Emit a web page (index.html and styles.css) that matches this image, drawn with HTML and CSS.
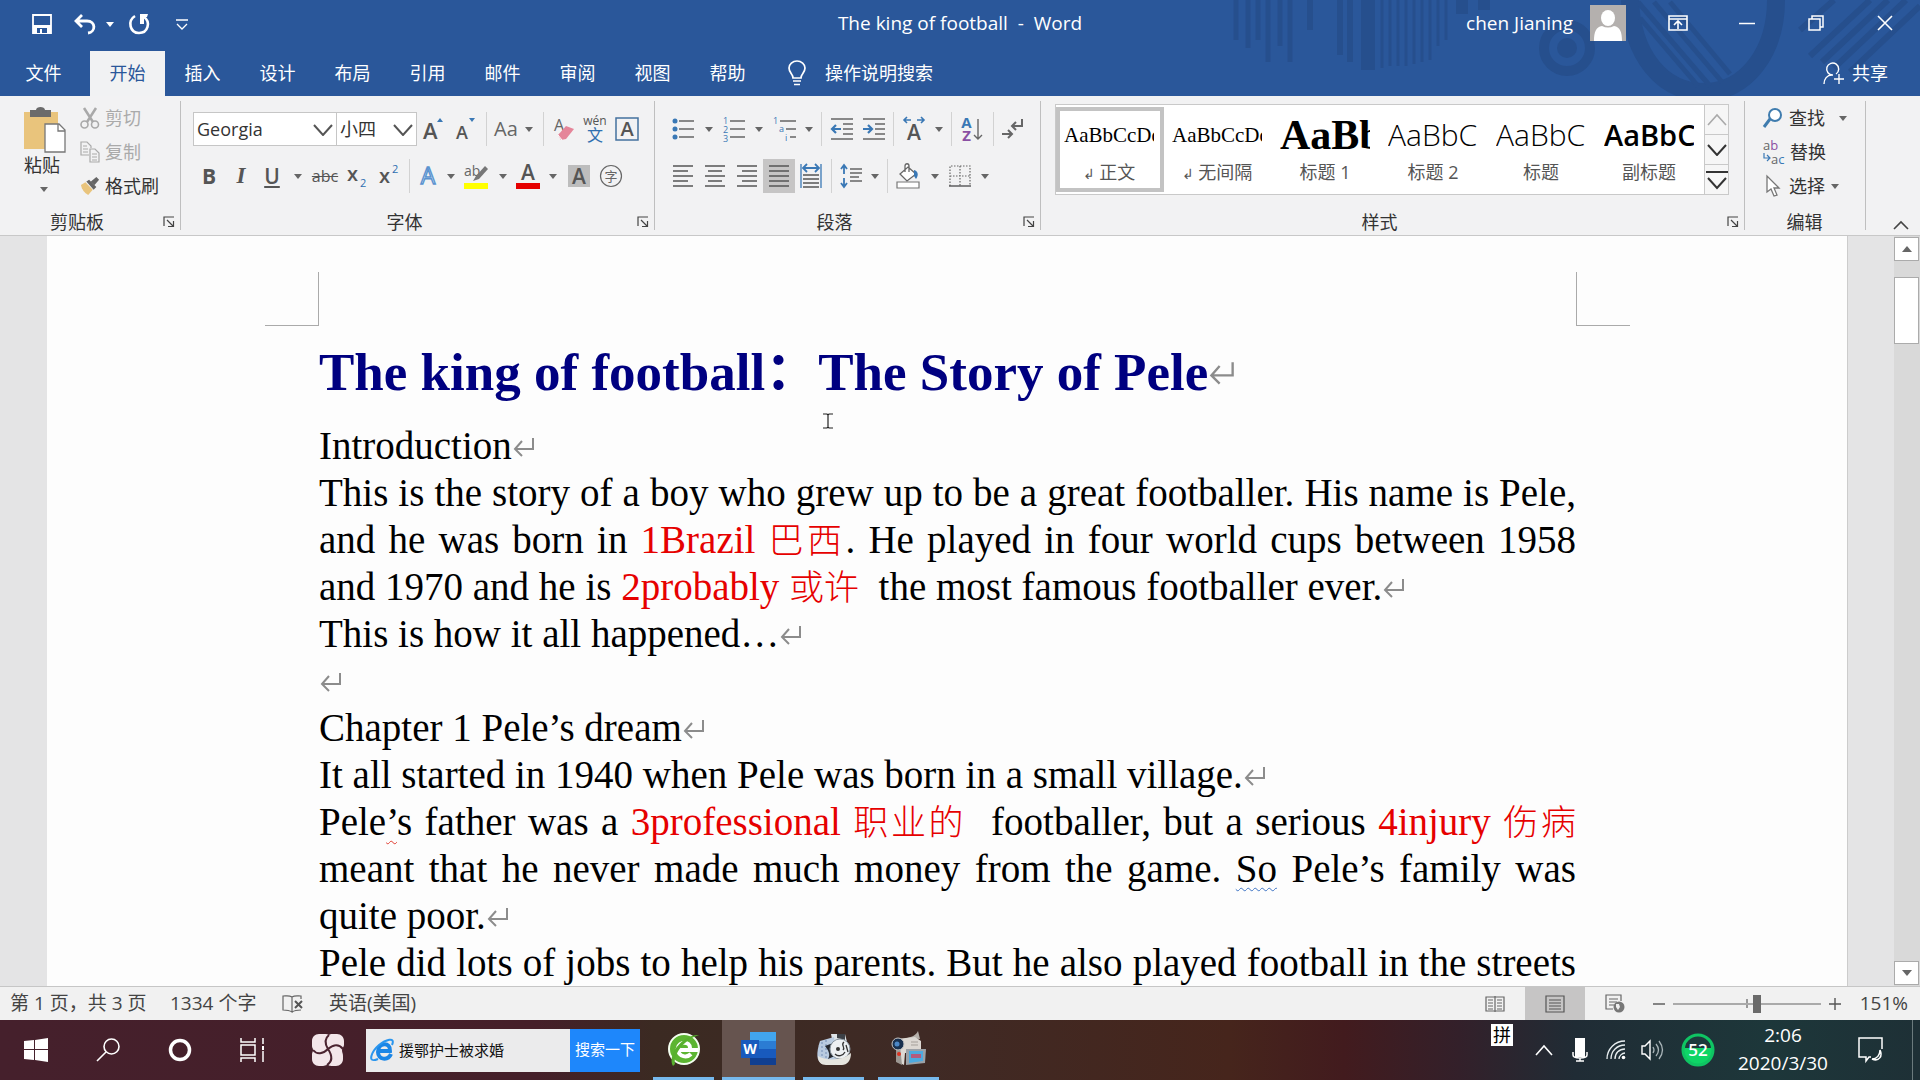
FILE: index.html
```html
<!DOCTYPE html>
<html lang="zh-CN">
<head>
<meta charset="utf-8">
<title>The king of football - Word</title>
<link rel="stylesheet" href="styles.css">
</head>
<body>
<svg class="defs" aria-hidden="true">
  <symbol id="drop" viewBox="0 0 8 5"><path d="M0 0h8L4 5z" fill="currentColor"/></symbol>
  <symbol id="chev" viewBox="0 0 20 12"><path d="M1 1l9 10 9-10" fill="none" stroke="currentColor" stroke-width="2"/></symbol>
  <symbol id="launch" viewBox="0 0 12 12"><path d="M1 10V1h10M4 4l6 6M10.500 5v5.500H5" fill="none" stroke="#444" stroke-width="1.200"/></symbol>
  <symbol id="ret" viewBox="0 0 22 20"><path d="M20 1v11H2M9 4l-7 8 7 7" fill="none" stroke="#8c8c8c" stroke-width="2"/></symbol>
</svg>

<header class="head">
  <svg class="art" viewBox="0 0 720 96" aria-hidden="true">
    <g fill="none" stroke="#264f8d">
      <path stroke-width="5" d="M36 0v40M48 0v48M58 0v40M68 0v62M80 0v46M90 0v62"/>
      <path stroke-width="6" d="M110 0v30M140 0v55M150 0v62"/>
      <path stroke-width="14" d="M168 0v70"/>
      <path stroke-width="3" d="M182 0v68M190 0v66M198 0v66M206 0v66M214 0v64M222 0v62M230 0v60M238 0v46M246 0v40"/>
      <path stroke-width="12" d="M262 0v14M284 0v10"/>
      <circle cx="367" cy="48" r="23" stroke-width="10"/>
      <path stroke-width="18" d="M430 0c2 55 32 92 74 92s72-40 72-92"/>
      <path stroke-width="5" d="M440 18l58 68M438 2l72 84M454 2l68 80M470 2l60 72"/>
      <path stroke-width="6" d="M610 56l60-56M622 62l66-62M634 68l72-68M650 72l70-66M600 30l34-30"/>
    </g>
    <circle cx="367" cy="48" r="10" fill="#264f8d"/>
  </svg>
  <div class="titlebar">
    <div class="quick">
      <button aria-label="保存"><svg width="20" height="20" viewBox="0 0 20 20"><path d="M1 1h18v18H1z" fill="none" stroke="#fff" stroke-width="1.800"/><path d="M1 11h18v8H1z" fill="#fff"/><path d="M5 14h10v5H5z" fill="#2a579a"/><path d="M8 15h2v4H8z" fill="#fff"/></svg></button>
      <button class="undo" aria-label="撤消"><svg width="22" height="20" viewBox="0 0 22 20"><path d="M8 1L2 7l6 6M3 7h10c9 0 9 11 1 12" fill="none" stroke="#fff" stroke-width="2.800"/></svg></button>
      <button class="mini" aria-label="撤消列表"><svg width="8" height="5"><use href="#drop"/></svg></button>
      <button class="redo" aria-label="重复"><svg width="22" height="22" viewBox="0 0 22 22"><path d="M7 3C-1 8 2 20 11 20s12-11 5-16" fill="none" stroke="#fff" stroke-width="2.600"/><path d="M12 1h8l-1 3h-3v7h-4z" fill="#fff"/></svg></button>
      <button class="custom" aria-label="自定义"><svg width="12" height="11" viewBox="0 0 12 11"><path d="M0 1h12M1 5l5 5 5-5" fill="none" stroke="#fff" stroke-width="1.300"/></svg></button>
    </div>
    <div class="doc-name">The king of football&nbsp; -&nbsp; Word</div>
    <div class="account">
      <span>chen Jianing</span>
      <svg class="avatar" width="36" height="36" viewBox="0 0 36 36"><path d="M0 0h36v36H0z" fill="#b4b0ae"/><ellipse cx="18" cy="13" rx="7" ry="8" fill="#fff"/><path d="M4 36c0-9 2-14 8-15 4 2 8 2 12 0 6 1 8 6 8 15z" fill="#fff"/></svg>
      <button class="win" aria-label="功能区显示选项"><svg width="20" height="16" viewBox="0 0 20 16"><path d="M1 1h18v14H1zM1 4h18M10 14V6M6 10l4-4 4 4" fill="none" stroke="#fff" stroke-width="1.600"/></svg></button>
      <button class="win" aria-label="最小化"><svg width="16" height="16"><path d="M0 8.500h16" stroke="#fff" stroke-width="1.500"/></svg></button>
      <button class="win" aria-label="还原"><svg width="16" height="16" viewBox="0 0 16 16"><path d="M1 4h11v11H1zM4 4V1h11v11h-3" fill="none" stroke="#fff" stroke-width="1.500"/></svg></button>
      <button class="win" aria-label="关闭"><svg width="16" height="16" viewBox="0 0 16 16"><path d="M1 1l14 14M15 1L1 15" stroke="#fff" stroke-width="1.600"/></svg></button>
    </div>
  </div>
  <nav class="tabs">
    <button class="tab file">文件</button>
    <button class="tab active">开始</button>
    <button class="tab">插入</button>
    <button class="tab">设计</button>
    <button class="tab">布局</button>
    <button class="tab">引用</button>
    <button class="tab">邮件</button>
    <button class="tab">审阅</button>
    <button class="tab">视图</button>
    <button class="tab">帮助</button>
    <button class="tell"><svg width="20" height="26" viewBox="0 0 20 26"><path d="M6 18c0-4-4-5-4-10a8 7 0 0 1 16 0c0 5-4 6-4 10zM6 21h8M7 24.500h6" fill="none" stroke="#fff" stroke-width="1.700"/></svg>操作说明搜索</button>
    <button class="share"><svg width="22" height="24" viewBox="0 0 22 24"><path d="M10 14a6 6 0 1 1 3-1M1 23c0-5 3-9 8-9M16 13v10M11 18h10" fill="none" stroke="#fff" stroke-width="1.400"/></svg>共享</button>
  </nav>
</header>

<section class="ribbon">
  <div class="group clip">
    <div class="clip-body">
      <button class="paste"><svg width="42" height="46" viewBox="0 0 42 46"><path d="M0 5h34v37H0z" fill="#e9c47c"/><path d="M6 3h6c0-4 9-4 9 0h6v7H6z" fill="#6b6b6b"/><path d="M21 17h14l6 6v22H21z" fill="#fff" stroke="#777" stroke-width="1.300"/><path d="M34 17v7h7" fill="none" stroke="#777" stroke-width="1.300"/></svg><span>粘贴</span><svg class="dd" width="8" height="5"><use href="#drop"/></svg></button>
      <div class="stack">
        <button class="row off"><svg width="20" height="22" viewBox="0 0 20 22"><path d="M4 1l9 14M16 1L7 15" stroke="#a9a9a9" stroke-width="2.500"/><circle cx="4.500" cy="17.500" r="3.500" fill="none" stroke="#a9a9a9" stroke-width="1.600"/><circle cx="15" cy="17.500" r="3.500" fill="none" stroke="#a9a9a9" stroke-width="1.600"/></svg>剪切</button>
        <button class="row off"><svg width="20" height="22" viewBox="0 0 20 22"><path d="M9 14H1V1h6l4 4v2M10 8h5l4 4v9h-9zM3 5h4M3 8h5M3 11h5M12 13h5M12 16h5M12 19h5" fill="none" stroke="#aaa" stroke-width="1.200"/></svg>复制</button>
        <button class="row"><svg width="20" height="22" viewBox="0 0 22 22"><path d="M1 10l5-3 8 8-5 6c-4-2-7-6-8-11z" fill="#e9c47c"/><path d="M7 6l3-2 8 8-3 3zM12 6l6-5 3 3-5 6z" fill="#666"/></svg>格式刷</button>
      </div>
    </div>
    <div class="caption"><span>剪贴板</span><button aria-label="剪贴板选项"><svg width="12" height="12"><use href="#launch"/></svg></button></div>
  </div>

  <div class="group font">
    <div class="tools">
      <div class="toolrow">
        <label class="pick name"><select aria-label="字体"><option>Georgia</option></select><svg width="20" height="12"><use href="#chev"/></svg></label>
        <label class="pick size"><select aria-label="字号"><option>小四</option></select><svg width="20" height="12"><use href="#chev"/></svg></label>
        <button class="w32" aria-label="增大字号"><svg width="22" height="24"><text x="1" y="22" font-size="22" class="g">A</text><path d="M15 5l3-4 3 4z" fill="#3a78b5"/></svg></button>
        <button class="w32" aria-label="缩小字号"><svg width="22" height="24"><text x="2" y="22" font-size="18" class="g">A</text><path d="M15 1h6l-3 4z" fill="#3a78b5"/></svg></button>
        <i class="w10 sep"></i>
        <button class="w45" aria-label="更改大小写"><svg width="40" height="24"><text x="0" y="19" font-size="20" class="t">Aa</text><path d="M31 10h8l-4 5z" fill="#666"/></svg></button>
        <i class="w14 sep"></i>
        <button class="w30" aria-label="清除格式"><svg width="22" height="24"><text x="0" y="14" font-size="16" class="t">A</text><path d="M4 18l8-9 8 3-8 10-5 1z" fill="#e58599"/><path d="M4 18l4 5" stroke="#fff"/></svg></button>
        <button class="w30 pinyin" aria-label="拼音指南"><span>wén</span><span>文</span></button>
        <button class="w34" aria-label="字符边框"><svg width="24" height="24"><path d="M1 1h22v22H1z" fill="none" stroke="#44719f" stroke-width="1.500"/><text x="12" y="19" text-anchor="middle" font-size="20" class="g">A</text></svg></button>
      </div>
      <div class="toolrow">
        <button class="w32 big b">B</button>
        <button class="w32 big it">I</button>
        <button class="w30 big u">U</button>
        <button class="w22 dd" aria-label="下划线样式"><svg width="8" height="5"><use href="#drop"/></svg></button>
        <button class="w32 strike">abc</button>
        <button class="w32" aria-label="下标"><svg width="20" height="24"><text x="0" y="17" font-size="20" class="g">x</text><text x="13" y="23" font-size="11" fill="#2f6fb0">2</text></svg></button>
        <button class="w32" aria-label="上标"><svg width="20" height="24"><text x="0" y="19" font-size="20" class="g">x</text><text x="13" y="9" font-size="11" fill="#2f6fb0">2</text></svg></button>
        <i class="w8 sep"></i>
        <button class="w30" aria-label="文本效果"><svg width="22" height="24"><text x="11" y="20" text-anchor="middle" font-size="23" fill="#fff" stroke="#5b93cf" stroke-width="1.400">A</text></svg></button>
        <button class="w16 dd" aria-label="文本效果列表"><svg width="8" height="5"><use href="#drop"/></svg></button>
        <button class="w34" aria-label="突出显示"><svg width="24" height="26"><text x="0" y="13" font-size="14" class="t">ab</text><path d="M21 3l3 3-9 10-6 2 3-5z" fill="#777"/><path d="M0 20h24v6H0z" fill="#ff0"/></svg></button>
        <button class="w20 dd" aria-label="突出显示颜色"><svg width="8" height="5"><use href="#drop"/></svg></button>
        <button class="w30" aria-label="字体颜色"><svg width="24" height="26"><text x="12" y="17" text-anchor="middle" font-size="21" class="g">A</text><path d="M0 20h24v6H0z" fill="#e50000"/></svg></button>
        <button class="w20 dd" aria-label="字体颜色列表"><svg width="8" height="5"><use href="#drop"/></svg></button>
        <button class="w32" aria-label="字符底纹"><svg width="22" height="22"><path d="M0 0h22v22H0z" fill="#bdbdbd"/><text x="11" y="19" text-anchor="middle" font-size="21" class="g">A</text></svg></button>
        <button class="w32" aria-label="带圈字符"><svg width="24" height="24"><circle cx="12" cy="12" r="10.500" fill="none" stroke="#666" stroke-width="1.200"/><text x="12" y="17" text-anchor="middle" font-size="13" class="t">字</text></svg></button>
      </div>
    </div>
    <div class="caption"><span>字体</span><button aria-label="字体选项"><svg width="12" height="12"><use href="#launch"/></svg></button></div>
  </div>

  <div class="group para">
    <div class="tools">
      <div class="toolrow">
        <button class="w32" aria-label="项目符号"><svg width="22" height="22"><g fill="#3a78b5"><circle cx="3" cy="3" r="2.500"/><circle cx="3" cy="11" r="2.500"/><circle cx="3" cy="19" r="2.500"/></g><path d="M7 3h15M7 11h15M7 19h15" stroke="#666" stroke-width="1.300"/></svg></button>
        <button class="w20 dd" aria-label="项目符号列表"><svg width="8" height="5"><use href="#drop"/></svg></button>
        <button class="w30" aria-label="编号"><svg width="22" height="26"><g fill="#3a78b5" font-size="9"><text y="8">1</text><text y="17">2</text><text y="26">3</text></g><path d="M7 5h15M7 13h15M7 21h15" stroke="#666" stroke-width="1.300"/></svg></button>
        <button class="w20 dd" aria-label="编号列表"><svg width="8" height="5"><use href="#drop"/></svg></button>
        <button class="w32" aria-label="多级列表"><svg width="24" height="26"><g fill="#3a78b5" font-size="9"><text y="8">1</text><text x="6" y="16">a</text><text x="12" y="25">i</text></g><path d="M7 5h16M13 13h10M17 21h6" stroke="#666" stroke-width="1.300"/></svg></button>
        <button class="w16 dd" aria-label="多级列表样式"><svg width="8" height="5"><use href="#drop"/></svg></button>
        <i class="w8 sep"></i>
        <button class="w34" aria-label="减少缩进"><svg width="22" height="22"><path d="M0 1h22M12 6h10M12 11h10M12 16h10M0 21h22" stroke="#666" stroke-width="1.300"/><path d="M10 11H2M5 7l-4 4 4 4" fill="none" stroke="#3a78b5" stroke-width="2.200"/></svg></button>
        <button class="w30" aria-label="增加缩进"><svg width="22" height="22"><path d="M0 1h22M12 6h10M12 11h10M12 16h10M0 21h22" stroke="#666" stroke-width="1.300"/><path d="M0 11h8M5 7l4 4-4 4" fill="none" stroke="#3a78b5" stroke-width="2.200"/></svg></button>
        <i class="w8 sep"></i>
        <button class="w34" aria-label="中文版式"><svg width="24" height="24"><text x="12" y="23" text-anchor="middle" font-size="21" class="g">A</text><path d="M9 3H2M5 0L2 3l3 3M15 3h7M19 0l3 3-3 3" fill="none" stroke="#3a78b5" stroke-width="1.600"/></svg></button>
        <button class="w16 dd" aria-label="中文版式列表"><svg width="8" height="5"><use href="#drop"/></svg></button>
        <i class="w8 sep"></i>
        <button class="w34 sort" aria-label="排序"><span class="az"><b>A</b><b>Z</b></span><svg width="9" height="24"><path d="M4 2v20M0 18l4 4 4-4" fill="none" stroke="#666" stroke-width="1.400"/></svg></button>
        <i class="w8 sep"></i>
        <button class="w32" aria-label="显示编辑标记"><svg width="22" height="20" viewBox="0 0 22 20"><path d="M20 0v7h-9M14 3l-4 4 4 4M0 15h9M6 11l4 4-4 4" fill="none" stroke="#666" stroke-width="2"/></svg></button>
      </div>
      <div class="toolrow">
        <button class="w32" aria-label="左对齐"><svg width="20" height="22"><path d="M0 1h20M0 6h15M0 11h20M0 16h15M0 21h20" stroke="#555" stroke-width="1.300"/></svg></button>
        <button class="w32" aria-label="居中"><svg width="20" height="22"><path d="M0 1h20M3 6h14M0 11h20M3 16h14M0 21h20" stroke="#555" stroke-width="1.300"/></svg></button>
        <button class="w32" aria-label="右对齐"><svg width="20" height="22"><path d="M0 1h20M5 6h15M0 11h20M5 16h15M0 21h20" stroke="#555" stroke-width="1.300"/></svg></button>
        <button class="w32 on" aria-label="两端对齐"><svg width="20" height="22"><path d="M0 1h20M0 6h20M0 11h20M0 16h20M0 21h20" stroke="#555" stroke-width="1.300"/></svg></button>
        <button class="w32" aria-label="分散对齐"><svg width="22" height="24"><path d="M1 0v24M21 0v24" stroke="#3a78b5" stroke-width="1.300"/><path d="M4 4h14M7 0L3 4l4 4M15 0l4 4-4 4" fill="none" stroke="#3a78b5" stroke-width="1.800"/><path d="M3 11h16M3 15h16M3 19h16M3 23h16" stroke="#555" stroke-width="1.300"/></svg></button>
        <i class="w8 sep"></i>
        <button class="w32" aria-label="行距"><svg width="22" height="24"><path d="M4 10V2M1 5l3-4 3 4M4 14v8M1 19l3 4 3-4" fill="none" stroke="#3a78b5" stroke-width="1.800"/><path d="M10 5h12M10 9h12M10 13h9M10 17h12" stroke="#666" stroke-width="1.300"/></svg></button>
        <button class="w16 dd" aria-label="行距列表"><svg width="8" height="5"><use href="#drop"/></svg></button>
        <i class="w8 sep"></i>
        <button class="w34" aria-label="底纹"><svg width="24" height="26"><path d="M1 19h22v6H1z" fill="#fff" stroke="#777" stroke-width="1.200"/><path d="M12 4l8 7-9 7-7-7zM9 9V3c0-3 4-3 4 0v6" fill="#fff" stroke="#666" stroke-width="1.300"/><path d="M18 7c4 1 5 5 2 9l-2-3z" fill="#3a78b5"/></svg></button>
        <button class="w20 dd" aria-label="底纹颜色"><svg width="8" height="5"><use href="#drop"/></svg></button>
        <button class="w30" aria-label="边框"><svg width="22" height="22"><path d="M1 21V1h20v20M11 1v20M1 11h20" fill="none" stroke="#666" stroke-width="1.200" stroke-dasharray="1.500 1.500"/><path d="M0 21h22" stroke="#555" stroke-width="1.400"/></svg></button>
        <button class="w20 dd" aria-label="边框列表"><svg width="8" height="5"><use href="#drop"/></svg></button>
      </div>
    </div>
    <div class="caption"><span>段落</span><button aria-label="段落选项"><svg width="12" height="12"><use href="#launch"/></svg></button></div>
  </div>

  <div class="group styles">
    <div class="gallery">
      <button class="style sel"><span class="pv body">AaBbCcDd</span><span class="nm"><small>↲</small> 正文</span></button>
      <button class="style"><span class="pv body">AaBbCcDd</span><span class="nm"><small>↲</small> 无间隔</span></button>
      <button class="style"><span class="pv h1">AaBb</span><span class="nm">标题 1</span></button>
      <button class="style"><span class="pv h2">AaBbC</span><span class="nm">标题 2</span></button>
      <button class="style"><span class="pv h2">AaBbC</span><span class="nm">标题</span></button>
      <button class="style"><span class="pv sub">AaBbC</span><span class="nm">副标题</span></button>
      <div class="scrolls">
        <button class="dim" aria-label="上一行"><svg width="20" height="12" viewBox="0 0 20 12"><path d="M1 11l9-10 9 10" fill="none" stroke="currentColor" stroke-width="1.600"/></svg></button>
        <button aria-label="下一行"><svg width="20" height="12"><use href="#chev"/></svg></button>
        <button aria-label="其他"><svg width="22" height="20" viewBox="0 0 22 20"><path d="M0 2h22M2 8l9 10 9-10" fill="none" stroke="#333" stroke-width="2"/></svg></button>
      </div>
    </div>
    <div class="caption"><span>样式</span><button aria-label="样式选项"><svg width="12" height="12"><use href="#launch"/></svg></button></div>
  </div>

  <div class="group edit">
    <div class="stack">
      <button class="row"><svg width="20" height="22" viewBox="0 0 20 22"><circle cx="12" cy="8" r="6" fill="#fff" stroke="#3f7cae" stroke-width="2"/><path d="M7 12l-6 8" stroke="#3f7cae" stroke-width="3"/></svg>查找<svg class="far" width="8" height="5"><use href="#drop"/></svg></button>
      <button class="row"><svg width="22" height="26"><text x="0" y="11" font-size="13" class="t">a<tspan fill="#8a4fa3">b</tspan></text><text x="8" y="25" font-size="13" class="t">a<tspan fill="#3a78b5">c</tspan></text><path d="M1 14v5h5M4 16l3 3-3 3" fill="none" stroke="#3a78b5" stroke-width="1.200"/></svg>替换</button>
      <button class="row"><svg width="20" height="24" viewBox="0 0 20 24"><path d="M4 2v16l4-3 3 7 3-1-3-7h5z" fill="#fff" stroke="#777" stroke-width="1.300"/></svg>选择<svg width="8" height="5"><use href="#drop"/></svg></button>
    </div>
    <div class="caption"><span>编辑</span></div>
  </div>
  <div class="fold"><button aria-label="折叠功能区"><svg width="16" height="10" viewBox="0 0 16 10"><path d="M1 9l7-7 7 7" fill="none" stroke="#444" stroke-width="1.600"/></svg></button></div>
</section>

<main class="work">
  <article class="page">
    <div class="marks"><i class="ml"></i><i class="mr"></i></div>
    <h1>The king of football：The Story of Pele<svg class="ret" width="26" height="24"><use href="#ret"/></svg></h1>
    <svg class="ibeam" width="10" height="16" viewBox="0 0 10 16"><path d="M0 1h4l1 1 1-1h4M5 2v12M0 15h4l1-1 1 1h4" fill="none" stroke="#222" stroke-width="1.200"/></svg>
    <p>Introduction<svg class="ret" width="22" height="20"><use href="#ret"/></svg></p>
    <p><span class="full">This is the story of a boy who grew up to be a great footballer. His name is Pele,</span><span class="full">and he was born in <em>1Brazil <b>巴西</b></em>. He played in four world cups between 1958</span><span class="last">and 1970 and he is <em>2probably <b>或许</b></em>&nbsp; the most famous footballer ever.<svg class="ret" width="22" height="20"><use href="#ret"/></svg></span></p>
    <p>This is how it all happened…<svg class="ret" width="22" height="20"><use href="#ret"/></svg></p>
    <p><svg class="ret" width="22" height="20"><use href="#ret"/></svg></p>
    <p>Chapter 1 Pele’s dream<svg class="ret" width="22" height="20"><use href="#ret"/></svg></p>
    <p>It all started in 1940 when Pele was born in a small village.<svg class="ret" width="22" height="20"><use href="#ret"/></svg></p>
    <p><span class="full">Pele<span class="bad">’</span>s father was a <em>3professional <b>职业的</b></em>&nbsp; footballer, but a serious <em>4injury <b>伤病</b></em></span><span class="full">meant that he never made much money from the game. <span class="gram">So</span> Pele’s family was</span><span class="last">quite poor.<svg class="ret" width="22" height="20"><use href="#ret"/></svg></span></p>
    <p><span class="full">Pele did lots of jobs to help his parents. But he also played football in the streets</span></p>
  </article>
  <div class="vscroll">
    <button aria-label="向上滚动"><svg width="10" height="6" viewBox="0 0 10 6"><path d="M0 6h10L5 0z" fill="#666"/></svg></button>
    <div class="track"><div class="thumb"></div></div>
    <button aria-label="向下滚动"><svg width="10" height="6" viewBox="0 0 10 6"><path d="M0 0h10L5 6z" fill="#666"/></svg></button>
  </div>
</main>

<footer class="status">
  <span class="pages">第 1 页，共 3 页</span>
  <span class="words">1334 个字</span>
  <button class="proof" aria-label="校对"><svg width="22" height="18" viewBox="0 0 22 18"><path d="M10 2C7 0 4 1 1 1v14c3 0 6 0 9 2zM10 2c3-2 6-1 9-1v3M10 17c3-2 6-2 9-2" fill="none" stroke="#666" stroke-width="1.200"/><path d="M13 6l7 7M20 6l-7 7" stroke="#555" stroke-width="2"/></svg></button>
  <span class="lang">英语(美国)</span>
  <div class="views">
    <button aria-label="阅读视图"><svg width="20" height="18" viewBox="0 0 20 18"><path d="M10 2H1v14h9l0 1V1M10 2h9v14h-9M3 5h5M3 8h5M3 11h5M3 14h5M12 5h5M12 8h5M12 11h5M12 14h5" fill="none" stroke="#666" stroke-width="1.200"/></svg></button>
    <button class="on" aria-label="页面视图"><svg width="20" height="18" viewBox="0 0 20 18"><path d="M1 1h18v16H1zM4 5h12M4 8h12M4 11h12M4 14h12" fill="none" stroke="#555" stroke-width="1.200"/></svg></button>
    <button aria-label="Web 版式视图"><svg width="20" height="19" viewBox="0 0 20 19"><path d="M8 15H1V1h15v6M4 5h9M4 8h8M4 11h5" fill="none" stroke="#666" stroke-width="1.200"/><circle cx="14" cy="13" r="5.500" fill="#777"/><path d="M11 10l3 0 1 3-2 3-2-3z" fill="#eee"/></svg></button>
  </div>
  <button class="step" aria-label="缩小"><svg width="12" height="12"><path d="M0 6h12" stroke="#555" stroke-width="1.400"/></svg></button>
  <input class="zoom" type="range" min="0" max="100" value="57" aria-label="缩放">
  <button class="step" aria-label="放大"><svg width="12" height="12"><path d="M0 6h12M6 0v12" stroke="#555" stroke-width="1.400"/></svg></button>
  <span class="pct">151%</span>
</footer>

<div class="taskbar">
  <button class="tk" aria-label="开始"><svg width="24" height="24" viewBox="0 0 24 24"><path d="M0 3l10-1v9H0zM11 2l13-2v11H11zM0 12h10v10L0 21zM11 12h13v12l-13-2z" fill="#fff"/></svg></button>
  <button class="tk" aria-label="搜索"><svg width="24" height="24" viewBox="0 0 24 24"><circle cx="15.500" cy="8.500" r="7.500" fill="none" stroke="#fff" stroke-width="1.600"/><path d="M10 14L1 23" stroke="#fff" stroke-width="1.600"/></svg></button>
  <button class="tk" aria-label="Cortana"><svg width="24" height="24"><circle cx="12" cy="12" r="9.500" fill="none" stroke="#fff" stroke-width="3.500"/></svg></button>
  <button class="tk" aria-label="任务视图"><svg width="24" height="24" viewBox="0 0 24 24"><path d="M1 0v4h14V0M1 24v-4h14v4M1 7h14v10H1zM23 0v6M23 13v11" fill="none" stroke="#fff" stroke-width="1.500"/><path d="M22 8h2v4h-2z" fill="#fff"/></svg></button>
  <button class="tk flower" aria-label="小工具"><svg width="32" height="32" viewBox="0 0 32 32"><path d="M7 0h7c2 0 2 1 3 1 1-1 2-1 3-1h5c4 0 7 3 7 7v4c0 2-2 3-2 5 0 3 1 3 1 6v3c0 4-3 7-7 7h-4c-3 0-3-1-5-1s-2 1-4 1H7c-4 0-7-3-7-7v-4c0-3 1-3 1-5s-1-2-1-4V7c0-4 3-7 7-7z" fill="#f3e6ea"/><path d="M17 1c-5 4-4 9-1 14M31 15c-5-6-10-4-15 0M15 31c6-4 5-10 1-16M1 16c4 5 10 4 15-1" fill="none" stroke="#4b2330" stroke-width="2"/></svg></button>
  <div class="find">
    <svg width="24" height="24" viewBox="0 0 24 24"><path d="M21 16c-3 7-13 6-13-2C8 4 21 4 20 13H9" fill="none" stroke="#1b86e6" stroke-width="4"/><path d="M8 21C-4 26 2 13 9 7 15 2 26-2 22 7" fill="none" stroke="#2b96ee" stroke-width="2"/></svg>
    <input type="text" value="援鄂护士被求婚" aria-label="搜索内容">
    <button>搜索一下</button>
  </div>
  <button class="app first" aria-label="浏览器"><svg width="34" height="36" viewBox="0 0 34 36"><circle cx="17" cy="18" r="15" fill="#5cb531" stroke="#f4fff0" stroke-width="2"/><path d="M11 17c1-7 12-7 12 0M31 19H11c1 7 9 8 13 4" fill="none" stroke="#fff" stroke-width="4"/><path d="M6 35C0 25 15 3 32 4 18 8 6 23 8 33z" fill="#58b02e"/></svg></button>
  <button class="app active" aria-label="Word"><svg width="36" height="36" viewBox="0 0 36 36"><path d="M9 1h26v9H9z" fill="#41a5ee"/><path d="M9 10h26v8H9z" fill="#2b7cd3"/><path d="M9 18h26v9H9z" fill="#185abd"/><path d="M9 27h26v7H9z" fill="#103f91"/><path d="M0 9h18v18H0z" fill="#185abd"/><text x="9" y="23" text-anchor="middle" font-size="14" font-weight="700" fill="#fff">W</text></svg></button>
  <button class="app third" aria-label="光盘工具"><svg width="36" height="36" viewBox="0 0 36 36"><path d="M15 3h14l2 8-14 2z" fill="#dfe4e8"/><path d="M21 3h8v6l-8-2z" fill="#3c4046"/><path d="M4 10l14-4 4 24-15 3C0 31 0 22 4 10z" fill="#b9cbe0"/><path d="M6 11v20M10 9v23" stroke="#8aa3c2" stroke-width="1.500" stroke-dasharray="2 2"/><path d="M9 15l8-3 4 12-9 4c3-5 0-9-3-13z" fill="#25282e"/><circle cx="24" cy="18" r="10" fill="#edf0f2" stroke="#8b97a1"/><circle cx="22" cy="18" r="2" fill="#333"/><path d="M28 11c-4 3 2 5-1 8M30 14l2 7M19 23c3 3 8 2 10-2" fill="none" stroke="#333" stroke-width="1.300"/><path d="M2 25c8 5 24 5 33-3 0 8-4 12-9 12H10c-5 0-8-3-8-9z" fill="#e6e5df"/></svg></button>
  <button class="app fourth" aria-label="录像机"><svg width="36" height="36" viewBox="0 0 36 36"><path d="M16 7c5-1 9-3 11-7l2 8z" fill="#b5b0aa"/><path d="M5 8l19-2 6 4v12H14l-1 12-8-4z" fill="#dcd8d3"/><path d="M5 15h4l2 19-6-3z" fill="#9c9792"/><circle cx="7" cy="13" r="6" fill="#18304f" stroke="#c4c4c4"/><circle cx="6" cy="13" r="2.500" fill="#4c87c6"/><circle cx="8" cy="23" r="2" fill="#d32"/><path d="M20 11h7M20 14h7" stroke="#a49f99"/><path d="M15 18h20l-1 14-19 2z" fill="#9ba1a7"/><path d="M18 20h14v10l-14 2z" fill="#4da9df"/><path d="M20 23h10v4H20z" fill="#b45a7e"/></svg></button>
  <div class="tray">
    <span class="ime">拼</span>
    <button class="t1" aria-label="显示隐藏的图标"><svg width="18" height="12" viewBox="0 0 18 12"><path d="M1 11l8-9 8 9" fill="none" stroke="#fff" stroke-width="1.600"/></svg></button>
    <button class="t1" aria-label="麦克风"><svg width="16" height="24" viewBox="0 0 16 24"><path d="M3 0h10v19H3z" fill="#fff"/><path d="M1 14v3c0 4 14 4 14 0v-3M8 20v3M4 23h8" fill="none" stroke="#fff" stroke-width="1.500"/></svg></button>
    <button class="t1" aria-label="网络"><svg width="20" height="20" viewBox="0 0 20 20"><path d="M1 19C1 9 9 1 19 1M5 19C5 11 11 5 19 5M9 19c0-6 4-10 10-10M13 19c0-3 3-6 6-6" fill="none" stroke="#e8eef0" stroke-width="1.300"/><circle cx="17.500" cy="17.500" r="1.800" fill="#fff"/></svg></button>
    <button class="t1" aria-label="音量"><svg width="22" height="20" viewBox="0 0 22 20"><path d="M1 6h3l5-5v18l-5-5H1z" fill="none" stroke="#fff" stroke-width="1.400"/><path d="M12 7q2 3 0 6M15 4q5 6 0 12M18 1q7 9 0 18" fill="none" stroke="#a9b4b8" stroke-width="1.300"/></svg></button>
    <svg class="score" width="34" height="34" viewBox="0 0 34 34"><circle cx="17" cy="17" r="15" fill="#0ed566"/><path d="M4 15a13 13 0 0 1 26 0z" fill="#1d3a3c"/><circle cx="17" cy="17" r="15" fill="none" stroke="#0fc463" stroke-width="3"/><text x="17" y="23" text-anchor="middle" font-size="17" font-weight="600" fill="#fff">52</text></svg>
    <div class="clock"><span>2:06</span><span>2020/3/30</span></div>
    <button class="note" aria-label="通知"><svg width="26" height="26" viewBox="0 0 26 26"><path d="M13 20h-2l-3 4v-4H1V1h23v11" fill="none" stroke="#fff" stroke-width="1.500"/><path d="M22 13c3 6-1 12-8 9 5 0 8-4 8-9z" fill="none" stroke="#fff" stroke-width="1.500"/></svg></button>
  </div>
</div>
</body>
</html>
```
FILE: styles.css
```css
* { box-sizing: border-box; }
html, body { margin: 0; height: 100%; }
body {
  display: flex;
  flex-direction: column;
  overflow: hidden;
  font: 18px/24px "Open Sans", "Noto Sans CJK SC", sans-serif;
  color: #333;
  background: #e6e6e6;
}
button {
  display: inline-flex;
  align-items: center;
  justify-content: center;
  flex: none;
  margin: 0;
  padding: 0;
  border: 0;
  background: none;
  color: inherit;
  font: inherit;
}
svg { display: block; flex: none; overflow: visible; font-family: "Open Sans", "Noto Sans CJK SC", sans-serif; }
.defs { position: absolute; width: 0; height: 0; }
.g { fill: #555; font-weight: 600; }
.t { fill: #666; }

/* Title bar and tabs */
.head { position: relative; flex: none; background: #2a579a; color: #fff; }
.art { position: absolute; top: 0; right: 0; width: 720px; height: 96px; overflow: hidden; }
.titlebar { position: relative; display: grid; grid-template-columns: 1fr auto 1fr; align-items: center; height: 47px; padding-bottom: 1px; }
.quick { display: flex; align-items: center; padding: 2px 0 0 32px; }
.undo { margin-left: 22px; }
.mini { width: 28px; }
.redo { margin-left: 4px; }
.custom { margin-left: 26px; }
.doc-name { font-size: 19px; line-height: 44px; }
.account { display: flex; align-items: center; justify-content: flex-end; padding-right: 1px; font-size: 19px; }
.avatar { margin: 0 17px 0 17px; }
.win { width: 69px; height: 40px; }
.tabs { position: relative; display: flex; height: 49px; padding-left: 6px; }
.tab { width: 75px; padding-top: 2px; }
.tab.file { margin-right: 9px; }
.tab.active { margin-top: 4px; padding: 0 0 2px; background: #f1f2f3; color: #2a579a; }
.tell { gap: 18px; margin-left: 22px; padding-top: 2px; }
.share { gap: 7px; margin: 0 32px 0 auto; padding-top: 2px; }

/* Ribbon */
.ribbon { display: flex; flex: none; height: 140px; background: #f2f2f3; border-bottom: 1px solid #c8c8c8; }
.group { display: flex; flex-direction: column; justify-content: space-between; flex: none; margin: 5px 0 5px; border-right: 1px solid #bfbfbf; }
.caption { display: grid; grid-template-columns: 1fr 24px; align-items: center; justify-items: center; height: 16px; padding-right: 2px; line-height: 16px; }
.caption button { justify-self: end; margin-right: 3px; }
.clip { width: 181px; }
.clip-body { display: flex; gap: 14px; padding-left: 24px; }
.paste { flex-direction: column; align-items: flex-start; width: 42px; padding-top: 6px; justify-content: flex-start; }
.paste .dd { margin: 10px 0 0 16px; color: #666; }
.stack { display: flex; flex-direction: column; }
.row { justify-content: flex-start; height: 34px; gap: 5px; }
.row.off { color: #aaa; }
.font { width: 474px; }
.para { width: 386px; }
.tools { display: flex; flex-direction: column; gap: 13px; padding: 11px 0 0 12px; }
.toolrow { display: flex; height: 34px; color: #555; }
.sep { display: flex; justify-content: center; }
.sep::before { content: ""; width: 1px; background: #d2d2d2; }
.w8 { width: 8px; }
.w10 { width: 10px; }
.w14 { width: 14px; }
.w16 { width: 16px; }
.w20 { width: 20px; }
.w22 { width: 22px; }
.w30 { width: 30px; }
.w32 { width: 32px; }
.w34 { width: 34px; }
.w45 { width: 45px; }
.dd { color: #666; }
.on { background: #c6c5c5; }
.big { font-size: 21px; }
.b { font-weight: 700; }
.it { font-family: "Liberation Serif", serif; font-style: italic; font-weight: 700; font-size: 23px; }
.u { font-weight: 600; text-decoration: underline; }
.strike { font-size: 16px; text-decoration: line-through; }
.pinyin { flex-direction: column; font-size: 12px; line-height: 12px; }
.pinyin span + span { color: #2f6fb0; font-size: 16px; line-height: 17px; }
.sort { gap: 2px; }
.az { display: flex; flex-direction: column; font-size: 15px; line-height: 13px; color: #3a78b5; }
.az b + b { color: #8a4fa3; }
.pick { position: relative; height: 34px; }
.pick select {
  appearance: none;
  width: 100%;
  height: 34px;
  padding: 0 3px;
  border: 1px solid #c6c6c6;
  border-radius: 0;
  background: #fff;
  color: #333;
  font: inherit;
}
.pick svg { position: absolute; right: 4px; top: 12px; }
.name { width: 144px; margin-right: -1px; }
.size { width: 81px; }
.styles { width: 704px; padding-left: 14px; }
.styles .caption { margin-left: -14px; }
.gallery { display: flex; width: 674px; height: 91px; margin-top: 3px; border: 1px solid #c9c9c9; background: #fff; }
.style { flex-direction: column; justify-content: flex-start; width: 108px; height: 85px; margin-top: 2px; padding: 4px 2px 0 0; border: 4px solid transparent; color: #000; }
.style.sel { border-color: #c3c3c3; }
.pv { display: flex; align-items: center; width: 90px; height: 40px; overflow: hidden; white-space: nowrap; }
.pv.body { font: 21px/40px "Liberation Serif", serif; }
.pv.h1 { font: 700 42px/40px "Liberation Serif", serif; }
.pv.h2 { font-size: 30px; font-weight: 300; }
.pv.sub { font-size: 29px; font-weight: 600; }
.nm { margin-top: 4px; color: #555; line-height: 26px; }
.nm small { font-size: 14px; }
.scrolls { display: flex; flex-direction: column; width: 24px; margin-left: auto; border-left: 1px solid #c9c9c9; background: #f6f6f6; color: #333; }
.scrolls button { flex: 1; }
.scrolls button + button { border-top: 1px solid #c9c9c9; }
.dim { color: #aaa; }
.edit { width: 121px; padding-left: 17px; }
.edit .row svg:last-child { margin-left: 1px; color: #666; }
.edit .row .far:last-child { margin-left: 9px; }
.edit .row svg:first-child { width: 22px; }
.edit .caption { grid-template-columns: 1fr; padding-right: 18px; }
.fold { display: flex; flex: 1; align-items: flex-end; justify-content: flex-end; padding: 0 11px 5px 0; }

/* Document */
.work { display: flex; flex: 1; min-height: 0; overflow: hidden; background: #e4e4e5; }
.page { position: relative; flex: 1; margin: 0 46px 0 47px; padding: 36px 271px 0 272px; overflow: hidden; background: #fdfdfd; border-right: 1px solid #ccc; color: #000; font: 39px/47px "Liberation Serif", "Noto Sans CJK SC", serif; }
.marks { display: flex; justify-content: space-between; height: 54px; margin: 0 -54px; }
.marks i { width: 54px; border-bottom: 1px solid #aaa; }
.ml { border-right: 1px solid #aaa; }
.mr { border-left: 1px solid #aaa; }
h1 { margin: 16px 0 20px; font-size: 53px; line-height: 60px; color: #000080; white-space: nowrap; }
p { margin: 0; min-height: 47px; white-space: nowrap; }
p > .full, p > .last { display: block; }
p > .full { text-align: justify; text-align-last: justify; white-space: normal; height: 47px; }
p em { color: #e60000; font-style: normal; }
p b { font-family: "Noto Sans CJK SC", sans-serif; font-size: 35px; font-weight: 300; line-height: 40px; }
.ret { display: inline-block; vertical-align: 2px; margin-left: 1px; }
h1 .ret { vertical-align: 5px; }
.ibeam { position: absolute; left: 776px; top: 177px; }
.bad { text-decoration: underline wavy #e03c31 1px; text-underline-offset: 5px; }
.gram { text-decoration: underline wavy #3f74c4 1px; text-underline-offset: 5px; }
.vscroll { display: flex; flex-direction: column; width: 26px; padding: 1px 1px 1px 0; background: #d9d9d9; }
.vscroll button { height: 24px; border: 1px solid #ababab; background: #fff; }
.track { flex: 1; padding-top: 16px; }
.thumb { height: 67px; border: 1px solid #ababab; background: #fff; }

/* Status bar */
.status { display: flex; flex: none; align-items: center; height: 34px; padding: 0 12px 0 10px; border-top: 1px solid #c6c6c6; background: #f1f1f1; color: #444; font-size: 19px; line-height: 24px; white-space: nowrap; }
.status > span { margin-top: -2px; }
.pages { width: 160px; }
.words { width: 111px; }
.proof { width: 24px; }
.lang { margin-left: 24px; }
.views { display: flex; align-self: stretch; margin: 0 2px 0 auto; }
.views button { width: 60px; }
.step { width: 24px; height: 30px; }
.zoom { appearance: none; width: 148px; height: 18px; margin: 0 2px; background: linear-gradient(#aaa, #aaa) center / 100% 2px no-repeat, linear-gradient(#999, #999) center / 2px 9px no-repeat; }
.zoom::-webkit-slider-thumb { appearance: none; width: 8px; height: 18px; background: #6a6a6a; }
.pct { width: 61px; text-align: right; }

/* Taskbar */
.taskbar { display: flex; flex: none; align-items: center; height: 60px; background: linear-gradient(90deg, #45202c 0, #451f29 28%, #3b2a22 34%, #3f2a25 48%, #46251c 64%, #421b1e 70%, #33202a 76%, #202c35 82%, #1d373a 92%, #1e3036 100%); color: #fff; }
.tk { width: 72px; height: 60px; }
.flower { width: 78px; padding-left: 2px; }
.find { display: flex; align-items: center; flex: none; width: 274px; height: 43px; padding-left: 4px; background: #ebebec; }
.find input { flex: 1; min-width: 0; height: 43px; padding: 0 0 2px 5px; border: 0; background: none; color: #111; font: 15px/20px "Noto Sans CJK SC", sans-serif; }
.find button { width: 70px; height: 43px; padding-bottom: 2px; background: #1e87fb; font-size: 15px; }
.app { width: 61px; height: 60px; border-bottom: 3px solid #76b9ed; padding-top: 1px; }
.first { margin-left: 13px; }
.active.app { width: 73px; margin: 0 8px; background: #66544f; }
.fourth { margin-left: 14px; }
.tray { display: flex; align-items: center; align-self: stretch; margin-left: auto; padding-right: 7px; }
.ime { align-self: flex-start; width: 22px; margin: 4px 13px 0 0; background: #fff; color: #000; line-height: 22px; text-align: center; }
.t1 { width: 36px; height: 60px; }
.score { margin-left: 11px; }
.clock { display: flex; flex-direction: column; width: 136px; padding-bottom: 2px; font-size: 19px; line-height: 28px; text-align: center; }
.note { width: 40px; height: 60px; margin-right: 21px; }
.tray::after { content: ""; align-self: stretch; width: 1px; background: #6b7a7d; }
```
